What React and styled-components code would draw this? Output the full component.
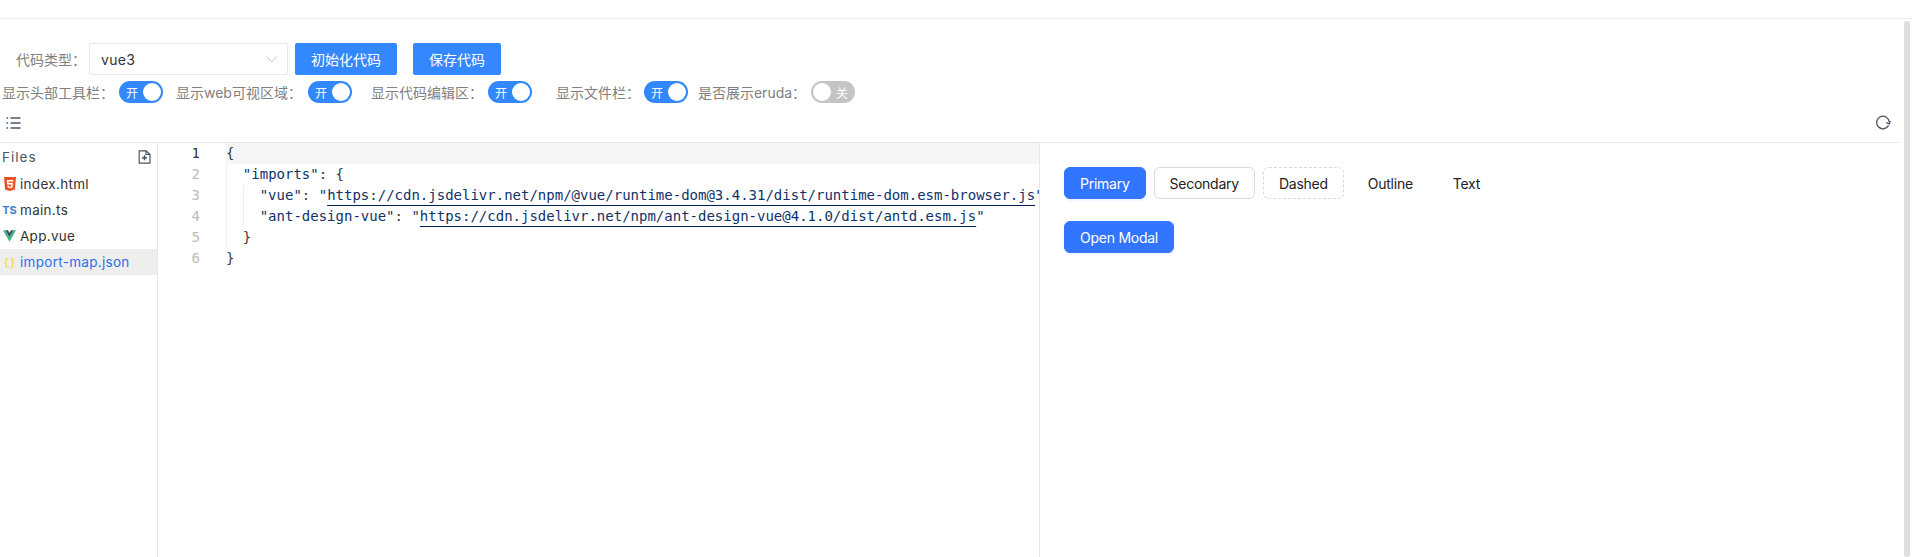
import React from "react";
import styled, { createGlobalStyle, css } from "styled-components";

const GlobalStyle = createGlobalStyle`
  html, body {
    margin: 0;
    height: 100%;
    background: #fff;
    overflow: hidden;
  }
  body {
    font-family: Inter, "Noto Sans CJK SC", sans-serif;
    font-size: 14px;
    color: #222;
  }
  #root { height: 100%; }
`;

const Page = styled.div`
  height: 557px;
  display: flex;
  flex-direction: column;
  position: relative;
  overflow: hidden;
`;

const TopBar = styled.div`
  height: 18px;
  flex: none;
  border-bottom: 1px solid #eeeeee;
`;

const Scrollbar = styled.div`
  position: absolute;
  top: 21px;
  right: 2px;
  bottom: 0;
  width: 6px;
  border-radius: 3px;
  background: #dedede;
`;

const Content = styled.div`
  flex: 1;
  min-height: 0;
  margin-right: 13px;
  display: flex;
  flex-direction: column;
`;

const ActionRow = styled.div`
  display: flex;
  align-items: center;
  height: 32px;
  margin-top: 24px;
  padding-left: 16px;
`;

const Label = styled.span`
  color: #808080;
  font-size: 14px;
  white-space: nowrap;
`;

const SelectBox = styled.div`
  width: 199px;
  height: 32px;
  box-sizing: border-box;
  margin-left: 3px;
  padding: 0 10px 0 11px;
  border: 1px solid #e8e8e8;
  border-radius: 2px;
  display: flex;
  align-items: center;
  justify-content: space-between;
  color: #333;
  letter-spacing: 0.3px;
`;

const BlueButton = styled.button`
  height: 32px;
  margin-left: ${({ $gap }) => $gap}px;
  padding: 0 ${({ $pad }) => $pad}px;
  border: none;
  border-radius: 2px;
  background: #3388ff;
  color: #fff;
  font: inherit;
`;

const SwitchRow = styled.div`
  display: flex;
  align-items: center;
  height: 22px;
  margin-top: 6px;
  padding-left: 2px;
`;

const SwitchGroup = styled.div`
  display: flex;
  align-items: center;
  margin-right: ${({ $after }) => $after}px;
`;

const SwitchTrack = styled.div`
  width: 44px;
  height: 22px;
  box-sizing: border-box;
  margin-left: ${({ $left }) => $left}px;
  padding: 2px;
  border-radius: 11px;
  background: ${({ $on }) => ($on ? "#3388ff" : "#c4c4c4")};
  display: flex;
  flex-direction: ${({ $on }) => ($on ? "row" : "row-reverse")};
  justify-content: space-between;
  align-items: center;
  color: #fff;
  font-size: 12px;
`;

const SwitchText = styled.span`
  ${({ $on }) => ($on ? "margin-left: 5px;" : "margin-right: 5px;")}
`;

const SwitchKnob = styled.span`
  width: 18px;
  height: 18px;
  border-radius: 50%;
  background: #fff;
`;

const Toolbar = styled.div`
  height: 39px;
  flex: none;
  border-bottom: 1px solid #e6e6ec;
  padding: 0 8px 0 6px;
  display: flex;
  align-items: center;
  justify-content: space-between;
  color: #4a5568;
`;

const Workspace = styled.div`
  flex: 1;
  min-height: 0;
  display: flex;
  margin-right: -13px;
`;

const FilesPanel = styled.div`
  width: 157px;
  flex: none;
  border-right: 1px solid #e6e6ec;
`;

const FilesHeader = styled.div`
  height: 27px;
  padding: 0 6px 0 2px;
  display: flex;
  align-items: center;
  justify-content: space-between;
  color: #4a5568;
  font-size: 13.5px;
  letter-spacing: 1px;
  margin-bottom: 1px;
`;

const FileRow = styled.div`
  height: 26px;
  display: flex;
  align-items: center;
  padding-left: 3px;
  gap: 4px;
  font-size: 13.5px;
  letter-spacing: 0.3px;
  ${({ $active }) =>
    $active
      ? css`
          background: #eeeeee;
          color: #2f6fed;
        `
      : css`
          color: #333;
        `}
`;

const IconSlot = styled.span`
  width: 13px;
  display: flex;
  justify-content: center;
  align-items: center;
`;

const TsMark = styled.span`
  color: #3b82c4;
  font-size: 11px;
  font-weight: 700;
  letter-spacing: 0;
`;

const BraceMark = styled.span`
  color: #f5d33f;
  font-family: "DejaVu Sans Mono", monospace;
  font-size: 11px;
  letter-spacing: 0;
`;

const EditorPane = styled.div`
  width: 882px;
  flex: none;
  box-sizing: border-box;
  border-right: 1px solid #e6e6ec;
  overflow: hidden;
  font-family: "DejaVu Sans Mono", monospace;
  font-size: 14px;
  line-height: 21px;
`;

const CodeLine = styled.div`
  display: flex;
  height: 21px;
  white-space: pre;
`;

const LineNumber = styled.span`
  width: 42px;
  flex: none;
  padding-right: 26px;
  text-align: right;
  color: ${({ $active }) => ($active ? "#333" : "#bbb")};
`;

const CodeText = styled.span`
  flex: 1;
  color: #3a3a3a;
  ${({ $active }) => $active && "background: #f5f6f8;"}
`;

const Guide = styled.span`
  display: inline-block;
  width: 2ch;
  height: 21px;
  vertical-align: top;
  box-shadow: inset 1px 0 0 #ebeef2;
`;

const Str = styled.span`
  color: #0f3268;
`;

const Link = styled.span`
  color: #0f3268;
  text-decoration: underline #00205a;
  text-decoration-thickness: 1px;
  text-underline-offset: 5px;
`;

const PreviewPane = styled.div`
  flex: 1;
  padding: 24px;
  display: flex;
  flex-direction: column;
  gap: 22px;
`;

const ButtonRow = styled.div`
  display: flex;
  gap: 8px;
`;

const variants = {
  primary: css`
    background: #3275ff;
    color: #fff;
    border: 1px solid #3275ff;
    box-shadow: 0 2px 0 rgba(50, 117, 255, 0.08);
  `,
  secondary: css`
    background: #fff;
    color: #222;
    border: 1px solid #d9d9d9;
  `,
  dashed: css`
    background: #fff;
    color: #222;
    border: 1px dashed #d9d9d9;
  `,
  plain: css`
    background: transparent;
    color: #222;
    border: 1px solid transparent;
  `,
};

const DemoButton = styled.button`
  height: 32px;
  box-sizing: border-box;
  padding: 0 15px;
  border-radius: 6px;
  font-family: Inter, sans-serif;
  font-size: 14px;
  letter-spacing: -0.25px;
  ${({ $variant }) => variants[$variant]}
`;

const ListIcon = () => (
  <svg width="15" height="14" viewBox="0 0 15 14" fill="none" stroke="currentColor" strokeWidth="1.3">
    <path d="M4.5 2h10M4.5 7h10M4.5 12h10" />
    <path d="M0.5 2h1.6M0.5 7h1.6M0.5 12h1.6" />
  </svg>
);

const RefreshIcon = () => (
  <svg width="16" height="16" viewBox="0 0 16 16" fill="none" stroke="currentColor" strokeWidth="1.3">
    <path d="M13.6 10.4A6.3 6.3 0 1 1 14.3 7.2" />
    <path d="M11.3 7.6l3 1.3 0.9-3" />
  </svg>
);

const NewFileIcon = () => (
  <svg width="13" height="14" viewBox="0 0 13 14" fill="none" stroke="currentColor" strokeWidth="1.2">
    <path d="M1.2 0.8h7l3.8 3.6v8.8h-10.8z" />
    <path d="M8 0.8v3.6h4" />
    <path d="M6.5 5.2v5M4 7.7h5" strokeWidth="1.5" />
  </svg>
);

const Html5Icon = () => (
  <svg width="12" height="14" viewBox="0 0 12 14">
    <path d="M0 0h12l-1.1 12.4L6 14l-4.9-1.6z" fill="#e44d26" />
    <path d="M6 1.2h4.7l-.9 10.3L6 12.8z" fill="#f16529" />
    <path d="M9.2 3H2.8l.4 4.4h4.1l-.2 2-1.1.4-1.1-.4-.1-1H3.5l.1 2 2.4.8 2.4-.8.4-4.4H4.6l-.1-1.4h4.6z" fill="#fff" />
  </svg>
);

const VueIcon = () => (
  <svg width="16" height="14" viewBox="0 0 16 14">
    <path d="M0 0h3.2L8 8.2 12.8 0H16L8 14z" fill="#41b883" />
    <path d="M3.2 0h3L8 3.2 9.8 0h3L8 8.2z" fill="#35495e" />
  </svg>
);

const ChevronIcon = () => (
  <svg width="11" height="7" viewBox="0 0 11 7" fill="none" stroke="#c4c4c4" strokeWidth="1">
    <path d="M0.5 0.5L5.5 6l5-5.5" />
  </svg>
);

const switches = [
  { label: "显示头部工具栏：", left: 5, after: 13, on: true },
  { label: "显示web可视区域：", left: 6, after: 19, on: true },
  { label: "显示代码编辑区：", left: 5, after: 24, on: true },
  { label: "显示文件栏：", left: 4, after: 10, on: true },
  { label: "是否展示eruda：", left: 5, after: 0, on: false },
];

const files = [
  { name: "index.html", icon: <Html5Icon /> },
  { name: "main.ts", icon: <TsMark>TS</TsMark> },
  { name: "App.vue", icon: <VueIcon /> },
  { name: "import-map.json", icon: <BraceMark>{"{}"}</BraceMark>, active: true },
];

const App = () => (
  <Page>
    <GlobalStyle />
    <TopBar />
    <Scrollbar />
    <Content>
      <ActionRow>
        <Label>代码类型：</Label>
        <SelectBox>
          vue3
          <ChevronIcon />
        </SelectBox>
        <BlueButton $gap={7} $pad={16}>初始化代码</BlueButton>
        <BlueButton $gap={16} $pad={16}>保存代码</BlueButton>
      </ActionRow>
      <SwitchRow>
        {switches.map((item) => (
          <SwitchGroup key={item.label} $after={item.after}>
            <Label>{item.label}</Label>
            <SwitchTrack $on={item.on} $left={item.left}>
              <SwitchText $on={item.on}>{item.on ? "开" : "关"}</SwitchText>
              <SwitchKnob />
            </SwitchTrack>
          </SwitchGroup>
        ))}
      </SwitchRow>
      <Toolbar>
        <ListIcon />
        <RefreshIcon />
      </Toolbar>
      <Workspace>
        <FilesPanel>
          <FilesHeader>
            Files
            <NewFileIcon />
          </FilesHeader>
          {files.map((file) => (
            <FileRow key={file.name} $active={file.active}>
              <IconSlot>{file.icon}</IconSlot>
              {file.name}
            </FileRow>
          ))}
        </FilesPanel>
        <EditorPane>
          <CodeLine>
            <LineNumber $active>1</LineNumber>
            <CodeText $active>{"{"}</CodeText>
          </CodeLine>
          <CodeLine>
            <LineNumber>2</LineNumber>
            <CodeText>
              <Guide />
              <Str>"imports"</Str>: {"{"}
            </CodeText>
          </CodeLine>
          <CodeLine>
            <LineNumber>3</LineNumber>
            <CodeText>
              <Guide />
              <Guide />
              <Str>"vue"</Str>: <Str>"</Str>
              <Link>https://cdn.jsdelivr.net/npm/@vue/runtime-dom@3.4.31/dist/runtime-dom.esm-browser.js</Link>
              <Str>"</Str>
            </CodeText>
          </CodeLine>
          <CodeLine>
            <LineNumber>4</LineNumber>
            <CodeText>
              <Guide />
              <Guide />
              <Str>"ant-design-vue"</Str>: <Str>"</Str>
              <Link>https://cdn.jsdelivr.net/npm/ant-design-vue@4.1.0/dist/antd.esm.js</Link>
              <Str>"</Str>
            </CodeText>
          </CodeLine>
          <CodeLine>
            <LineNumber>5</LineNumber>
            <CodeText>
              <Guide />
              {"}"}
            </CodeText>
          </CodeLine>
          <CodeLine>
            <LineNumber>6</LineNumber>
            <CodeText>{"}"}</CodeText>
          </CodeLine>
        </EditorPane>
        <PreviewPane>
          <ButtonRow>
            <DemoButton $variant="primary">Primary</DemoButton>
            <DemoButton $variant="secondary">Secondary</DemoButton>
            <DemoButton $variant="dashed">Dashed</DemoButton>
            <DemoButton $variant="plain">Outline</DemoButton>
            <DemoButton $variant="plain">Text</DemoButton>
          </ButtonRow>
          <ButtonRow>
            <DemoButton $variant="primary">Open Modal</DemoButton>
          </ButtonRow>
        </PreviewPane>
      </Workspace>
    </Content>
  </Page>
);

export default App;
